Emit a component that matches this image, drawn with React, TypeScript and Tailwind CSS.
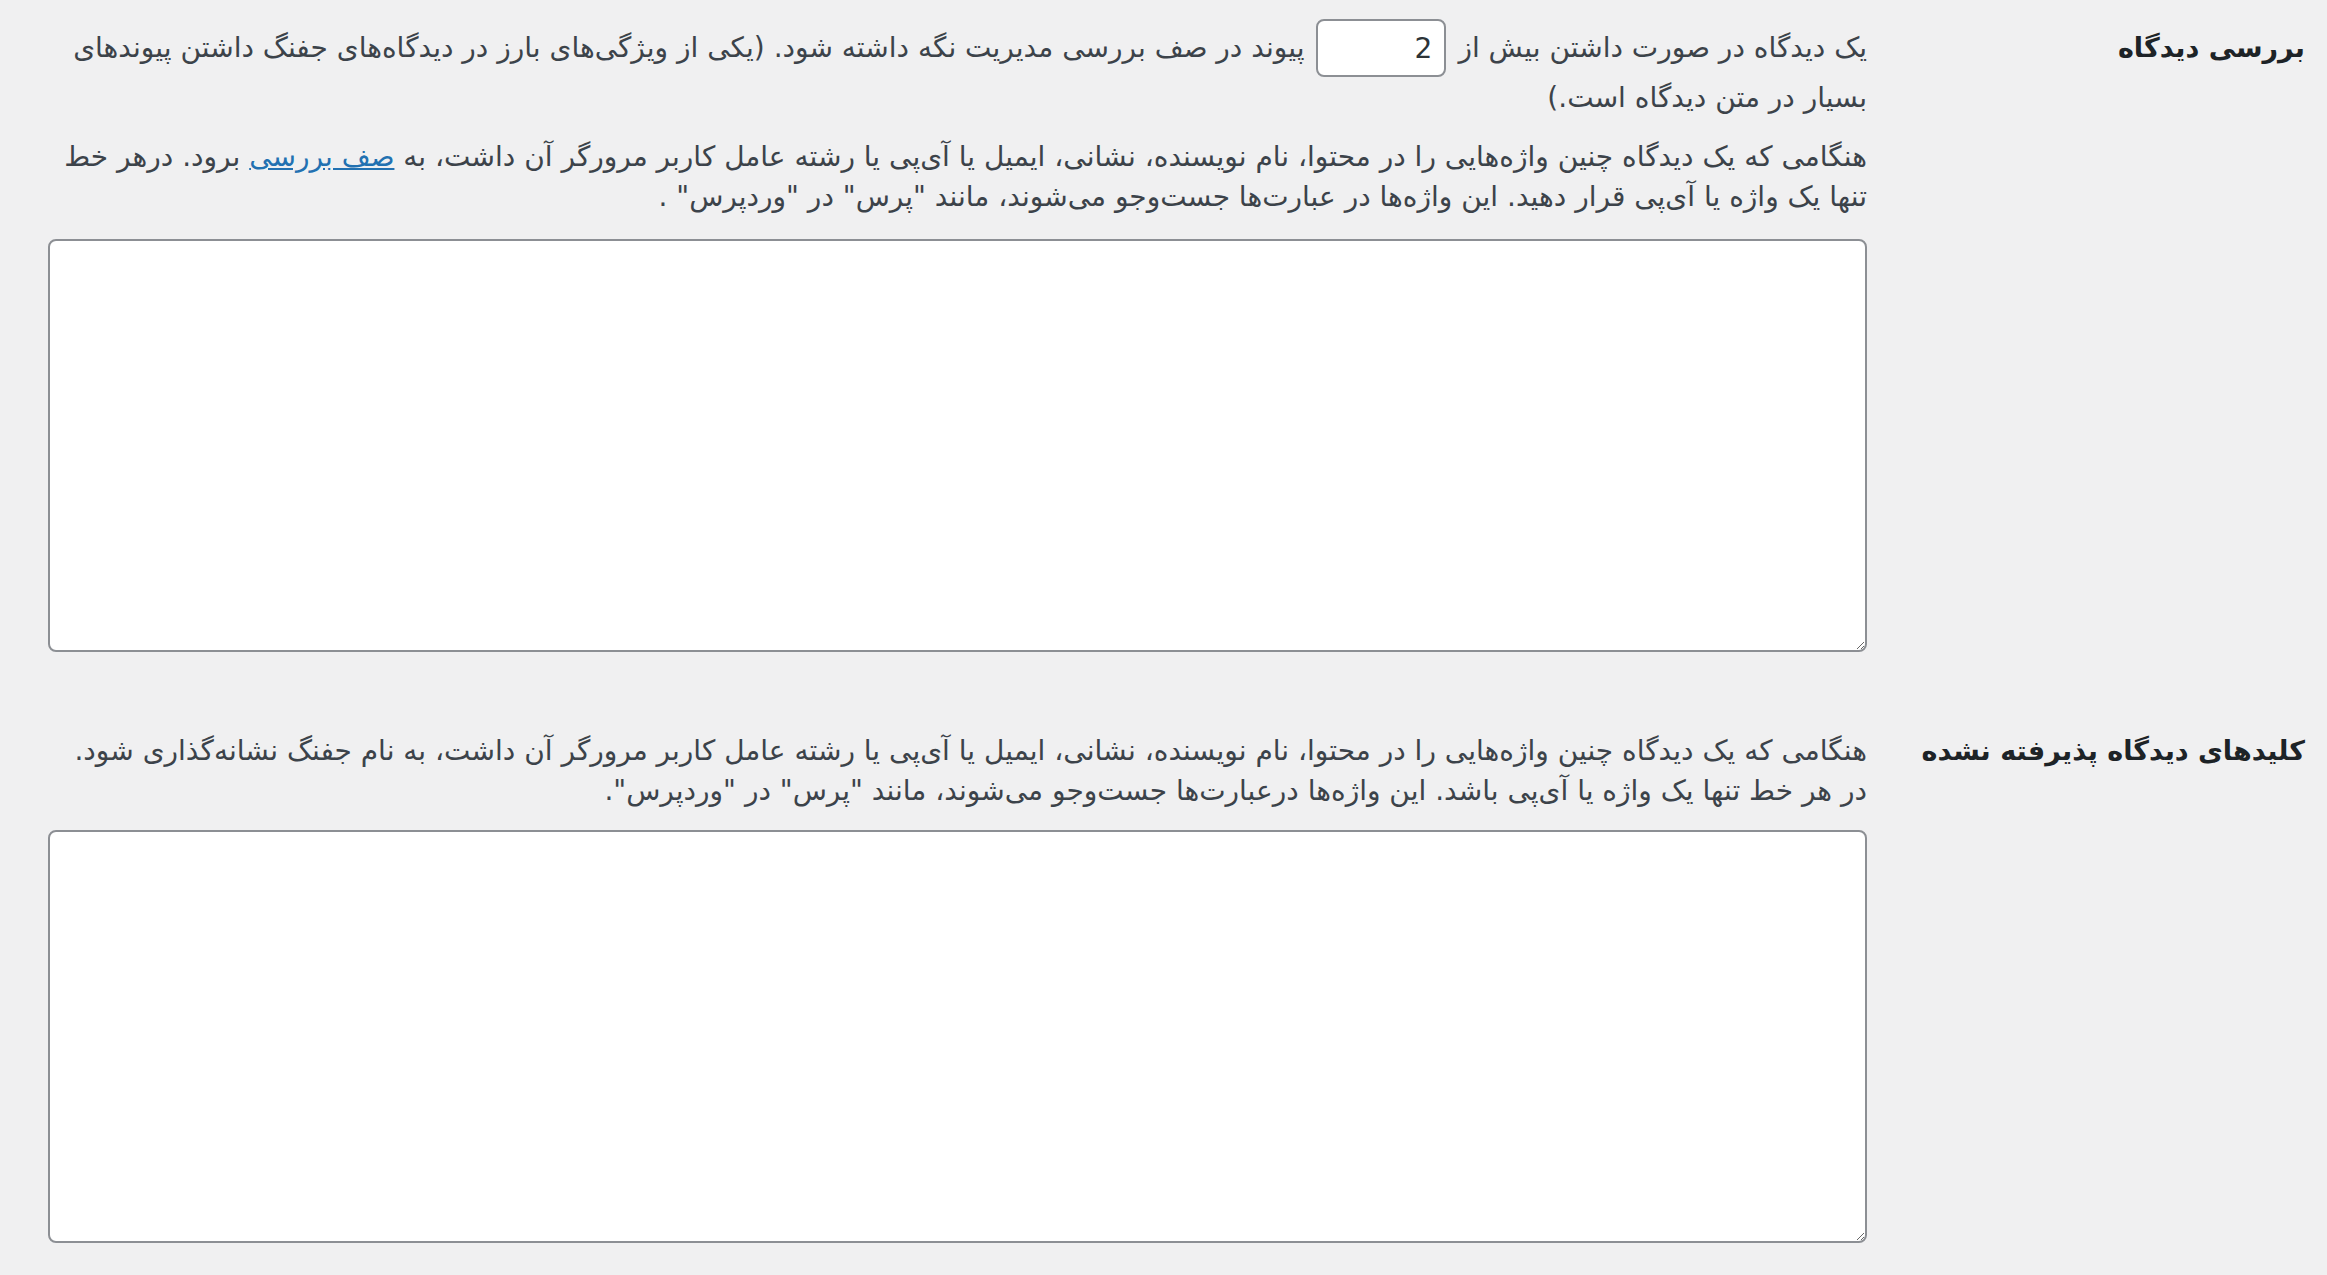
import React from 'react'

const font = "font-['DejaVu_Sans',_'Noto_Sans',_sans-serif]"

function Heading({ children, lineH }: { children: React.ReactNode; lineH: string }) {
  return (
    <div className={`w-[438px] shrink-0 flex items-center ${lineH}`}>
      <span className="text-[27px] font-semibold text-[#1d2327] leading-[36px]">{children}</span>
    </div>
  )
}

function Area() {
  return (
    <textarea
      dir="ltr"
      className="block w-full h-[413px] bg-white border-[2px] border-[#8c8f94] rounded-[8px] p-2 text-[26px] text-[#2c3338] outline-none"
    />
  )
}

export default function App() {
  return (
    <div dir="rtl" className={`min-h-screen bg-[#f0f0f1] pt-[18px] pr-[22px] pl-[48px] ${font}`}>
      {/* بررسی دیدگاه */}
      <div className="flex">
        <Heading lineH="h-[60px]">بررسی دیدگاه</Heading>
        <div className="flex-1 min-w-0 text-[28px] text-[#3c434a] whitespace-nowrap">
          <div className="flex items-center h-[60px]">
            <span>یک دیدگاه در صورت داشتن بیش از</span>
            <input
              type="text"
              defaultValue="2"
              className="mx-[12px] w-[130px] h-[58px] bg-white border-[2px] border-[#8c8f94] rounded-[8px] px-[12px] text-[28px] text-[#2c3338] text-right outline-none"
            />
            <span>پیوند در صف بررسی مدیریت نگه داشته شود. (یکی از ویژگی‌های بارز در دیدگاه‌های جفنگ داشتن پیوندهای</span>
          </div>
          <div className="leading-[40px]">بسیار در متن دیدگاه است.)</div>

          <p className="mt-[19px] leading-[40px]">
            هنگامی که یک دیدگاه چنین واژه‌هایی را در محتوا، نام نویسنده، نشانی، ایمیل یا آی‌پی یا رشته عامل کاربر مرورگر آن داشت، به{' '}
            <a href="#" className="text-[#2271b1] underline">صف بررسی</a> برود. درهر خط
            <br />
            تنها یک واژه یا آی‌پی قرار دهید. این واژه‌ها در عبارت‌ها جست‌وجو می‌شوند، مانند "پرس" در "وردپرس" .
          </p>

          <div className="mt-[22px]">
            <Area />
          </div>
        </div>
      </div>

      {/* کلیدهای دیدگاه پذیرفته نشده */}
      <div className="flex mt-[79px] pb-[32px]">
        <Heading lineH="h-[40px]">کلیدهای دیدگاه پذیرفته نشده</Heading>
        <div className="flex-1 min-w-0 text-[28px] text-[#3c434a] whitespace-nowrap">
          <p className="leading-[40px]">
            هنگامی که یک دیدگاه چنین واژه‌هایی را در محتوا، نام نویسنده، نشانی، ایمیل یا آی‌پی یا رشته عامل کاربر مرورگر آن داشت، به نام جفنگ نشانه‌گذاری شود.
            <br />
            در هر خط تنها یک واژه یا آی‌پی باشد. این واژه‌ها درعبارت‌ها جست‌وجو می‌شوند، مانند "پرس" در "وردپرس".
          </p>
          <div className="mt-[19px]">
            <Area />
          </div>
        </div>
      </div>
    </div>
  )
}
